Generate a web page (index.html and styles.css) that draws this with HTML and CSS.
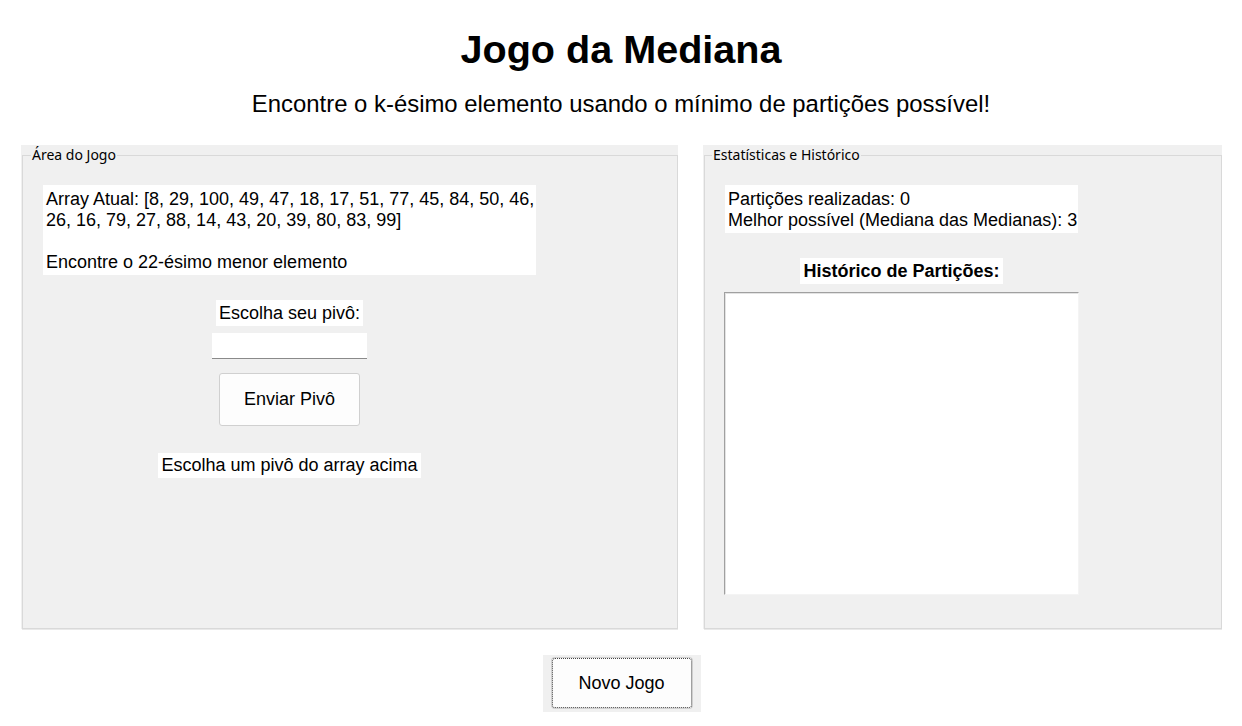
FILE: index.html
```html
<!DOCTYPE html>
<html lang="pt">
<head>
<meta charset="utf-8">
<title>Jogo da Mediana</title>
<link rel="stylesheet" href="styles.css">
</head>
<body>
<header class="header">
  <h1 class="title">Jogo da Mediana</h1>
  <p class="subtitle">Encontre o k-ésimo elemento usando o mínimo de partições possível!</p>
</header>
<main class="panels">
  <div class="panel panel-left">
    <fieldset class="frame">
      <legend class="frame-label">Área do Jogo</legend>
      <div class="column column-game">
        <div class="label label-array">Array Atual: [8, 29, 100, 49, 47, 18, 17, 51, 77, 45, 84, 50, 46,<br>26, 16, 79, 27, 88, 14, 43, 20, 39, 80, 83, 99]<br><br>Encontre o 22-ésimo menor elemento</div>
        <div class="label label-prompt">Escolha seu pivô:</div>
        <input class="entry" type="text">
        <button class="btn btn-send" type="button">Enviar Pivô</button>
        <div class="label label-status">Escolha um pivô do array acima</div>
      </div>
    </fieldset>
  </div>
  <div class="panel panel-right">
    <fieldset class="frame">
      <legend class="frame-label">Estatísticas e Histórico</legend>
      <div class="column column-stats">
        <div class="label label-stats">Partições realizadas: 0<br>Melhor possível (Mediana das Medianas): 3</div>
        <div class="label label-history">Histórico de Partições:</div>
        <div class="listbox"></div>
      </div>
    </fieldset>
  </div>
</main>
<footer class="footer">
  <div class="footer-box">
    <button class="btn btn-new" type="button">Novo Jogo</button>
  </div>
</footer>
</body>
</html>
```
FILE: styles.css
```css
* { box-sizing: border-box; }
html, body { margin: 0; padding: 0; background: #ffffff; }
body {
  font-family: "Liberation Sans", Arial, sans-serif;
  color: #000000;
  width: 1242px;
  height: 726px;
  overflow: hidden;
}
.header { text-align: center; }
.title {
  margin: 0;
  padding-top: 26px;
  font-size: 39.6px;
  line-height: 46px;
  font-weight: bold;
}
.subtitle {
  margin: 18px 0 0;
  font-size: 23.9px;
  line-height: 28px;
}
.panels {
  display: flex;
  gap: 25px;
  margin-top: 27px;
  padding: 0 20px 0 21px;
  height: 484px;
}
.panel {
  background: #f0f0f0;
  height: 484px;
}
.panel-left { width: 657px; padding-left: 1px; }
.panel-right { width: 519px; padding-left: 1px; }
.frame {
  margin: 0;
  height: 484px;
  border: 1px solid #d9d9d9;
  box-shadow: 0 1px 0 #e9e9e9;
  padding: 0 0 0 20px;
  min-width: 0;
}
.panel-right .frame { padding-left: 19px; }
.frame-label {
  font-family: "Noto Sans", "Open Sans", sans-serif;
  font-size: 14px;
  line-height: 20px;
  padding: 0 1px;
  margin-left: -12px;
  color: #000;
}
.column {
  display: flex;
  flex-direction: column;
  margin-top: 20px;
}
.column-game { width: 493px; align-items: center; }
.column-stats { width: 355px; align-items: center; }
.label {
  background: #ffffff;
  font-size: 18px;
  white-space: nowrap;
  padding: 3px;
}
.label-array {
  width: 493px;
  line-height: 21px;
  padding: 4px 3px 2px;
}
.label-prompt { margin-top: 25px; line-height: 20px; }
.entry {
  margin-top: 7px;
  width: 155px;
  height: 26px;
  border: none;
  border-bottom: 1px solid #8a8a8a;
  background: #ffffff;
  padding: 0 4px;
  font: 18px "Liberation Sans", Arial, sans-serif;
}
.btn {
  font-family: "Liberation Sans", Arial, sans-serif;
  font-size: 18px;
  color: #000;
  background: #fdfdfd;
  border: 1px solid #d0d0d0;
  border-radius: 3px;
  padding: 0;
}
.btn-send {
  margin-top: 14px;
  width: 141px;
  height: 53px;
}
.label-status { margin-top: 27px; line-height: 19px; }
.label-stats {
  width: 353px;
  line-height: 21px;
  padding: 4px 3px 2px;
}
.label-history {
  margin-top: 25px;
  line-height: 20px;
  font-weight: bold;
}
.listbox {
  margin-top: 8px;
  width: 355px;
  height: 303px;
  background: #ffffff;
  border-top: 1px solid #a0a0a0;
  border-left: 1px solid #a0a0a0;
  border-right: 1px solid #f4f4f4;
  border-bottom: 1px solid #f4f4f4;
  box-shadow: inset 1px 1px 0 #e3e3e3;
}
.footer {
  display: flex;
  justify-content: center;
  margin-top: 26px;
  padding-left: 1px;
}
.footer-box {
  background: #f0f0f0;
  padding: 3px 9px 4px;
}
.btn-new {
  width: 140px;
  height: 50px;
  border: 1px dotted #444;
  box-shadow: 0 0 0 1px #cfcfcf;
}
```
